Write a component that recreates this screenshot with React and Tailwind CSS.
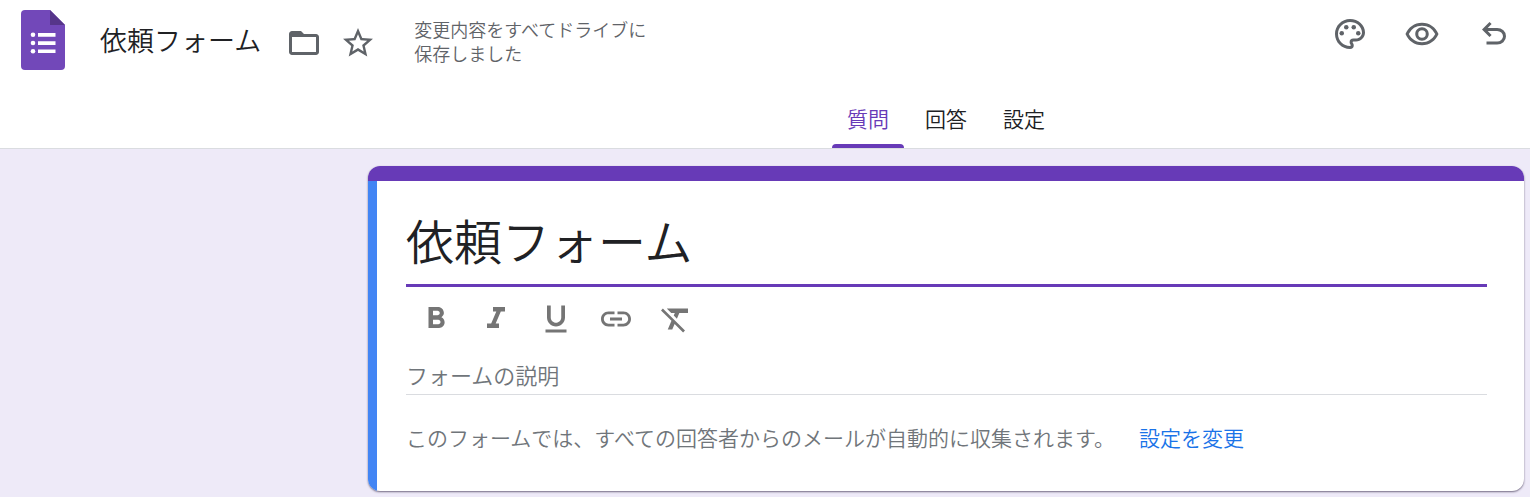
import { useState } from "react";
import {
  MdFolderOpen,
  MdStarBorder,
  MdOutlinePalette,
  MdOutlineRemoveRedEye,
  MdFormatBold,
  MdFormatItalic,
  MdFormatUnderlined,
  MdLink,
  MdFormatClear,
} from "react-icons/md";

const tabs = [
  { key: "questions", label: "質問" },
  { key: "responses", label: "回答" },
  { key: "settings", label: "設定" },
];

const formatTools = [
  { key: "bold", label: "太字", Icon: MdFormatBold },
  { key: "italic", label: "斜体", Icon: MdFormatItalic },
  { key: "underline", label: "下線", Icon: MdFormatUnderlined },
  { key: "link", label: "リンクを挿入", Icon: MdLink },
  { key: "clear", label: "書式をクリア", Icon: MdFormatClear },
];

const FormsLogo = () => (
  <svg viewBox="0 0 44 60" className="w-[44px] h-[60px]" aria-hidden="true">
    <path
      fill="#7248b9"
      d="M4 0H29L44 15V56a4 4 0 0 1-4 4H4a4 4 0 0 1-4-4V4a4 4 0 0 1 4-4z"
    />
    <path fill="#56358a" d="M29 0L44 15H29z" />
    <path
      fill="#fff"
      d="M17 23h17.500v3.700H17zM17 31.200h17.500v3.700H17zM17 39.400h17.500v3.700H17z"
    />
    <circle cx="12" cy="24.800" r="2.300" fill="#fff" />
    <circle cx="12" cy="33" r="2.300" fill="#fff" />
    <circle cx="12" cy="41.200" r="2.300" fill="#fff" />
  </svg>
);

const UndoIcon = () => (
  <svg viewBox="0 0 24 24" className="size-9" fill="currentColor" aria-hidden="true">
    <path d="M7 19v-2h7.100q1.575 0 2.737-1Q18 15 18 13.500T16.837 11Q15.675 10 14.100 10H7.800l2.600 2.600L9 14 4 9l5-5 1.400 1.400L7.800 8h6.300q2.425 0 4.163 1.575Q20 11.150 20 13.500t-1.737 3.925Q16.525 19 14.100 19z" />
  </svg>
);

export default function App() {
  const [tab, setTab] = useState("questions");
  const [title, setTitle] = useState("依頼フォーム");
  const [description, setDescription] = useState("");

  return (
    <div className="min-h-screen bg-[#eeeaf8] font-['Noto_Sans_CJK_JP',sans-serif] font-[350] text-[#202124]">
      {/* Header */}
      <header className="bg-white border-b border-[#dadce0]">
        <div className="flex items-start justify-between h-[92px] pl-[21px] pr-[18px] pt-[10px]">
          <div className="flex items-start">
            <FormsLogo />
            <h1 className="ml-[35px] mt-[10px] text-[27px] leading-[40px]">{title}</h1>
            <div className="flex gap-[18px] ml-[25px] mt-[15px] text-[#5f6368]">
              <button aria-label="フォルダに移動">
                <MdFolderOpen className="size-9" />
              </button>
              <button aria-label="スター">
                <MdStarBorder className="size-9" />
              </button>
            </div>
            <p className="w-[244px] ml-[38px] mt-[7px] text-lg leading-6 text-[#5f6368]">
              変更内容をすべてドライブに保存しました
            </p>
          </div>
          <div className="flex gap-9 mt-[6px] text-[#5f6368]">
            <button aria-label="テーマをカスタマイズ">
              <MdOutlinePalette className="size-9" />
            </button>
            <button aria-label="プレビュー">
              <MdOutlineRemoveRedEye className="size-9" />
            </button>
            <button aria-label="元に戻す">
              <UndoIcon />
            </button>
          </div>
        </div>

        {/* Tabs */}
        <nav className="flex justify-center gap-[6px] ml-[368px] mr-[6px]">
          {tabs.map((t) => (
            <button
              key={t.key}
              onClick={() => setTab(t.key)}
              className={`flex flex-col justify-between w-[72px] h-14 pt-[10px] text-[21px] leading-8 ${
                tab === t.key ? "text-[#673ab7]" : "text-[#202124]"
              }`}
            >
              <span className="w-full text-center">{t.label}</span>
              {tab === t.key && (
                <span className="w-full h-1 rounded-t-[4px] bg-[#673ab7]" />
              )}
            </button>
          ))}
        </nav>
      </header>

      {/* Form card */}
      <main className="ml-[368px] mr-[6px] pt-[17px]">
        <section className="rounded-xl overflow-hidden bg-white shadow-[0_1px_2px_rgba(60,50,80,0.7)]">
          <div className="h-[15px] bg-[#673ab7]" />
          <div className="border-l-[9px] border-[#4285f4] pl-[29px] pr-[37px] pt-[23px] pb-[38px]">
            <input
              aria-label="フォームのタイトル"
              value={title}
              onChange={(e) => setTitle(e.target.value)}
              className="block w-full h-[83px] pb-[10px] text-5xl border-b-[3px] border-[#673ab7] outline-none"
            />
            <div className="flex gap-6 pl-3 mt-[14px] text-[#757575]">
              {formatTools.map(({ key, label, Icon }) => (
                <button key={key} aria-label={label}>
                  <Icon className="size-9" />
                </button>
              ))}
            </div>
            <input
              aria-label="フォームの説明"
              placeholder="フォームの説明"
              value={description}
              onChange={(e) => setDescription(e.target.value)}
              className="block w-full h-10 pb-[2px] mt-[18px] text-[22px] border-b border-[#dadce0] outline-none placeholder:text-[#70757a]"
            />
            <p className="mt-[26px] text-[21px] leading-8 text-[#70757a]">
              このフォームでは、すべての回答者からのメールが自動的に収集されます。
              <a href="#settings" className="ml-6 text-[#1a73e8]">
                設定を変更
              </a>
            </p>
          </div>
        </section>
      </main>
    </div>
  );
}
